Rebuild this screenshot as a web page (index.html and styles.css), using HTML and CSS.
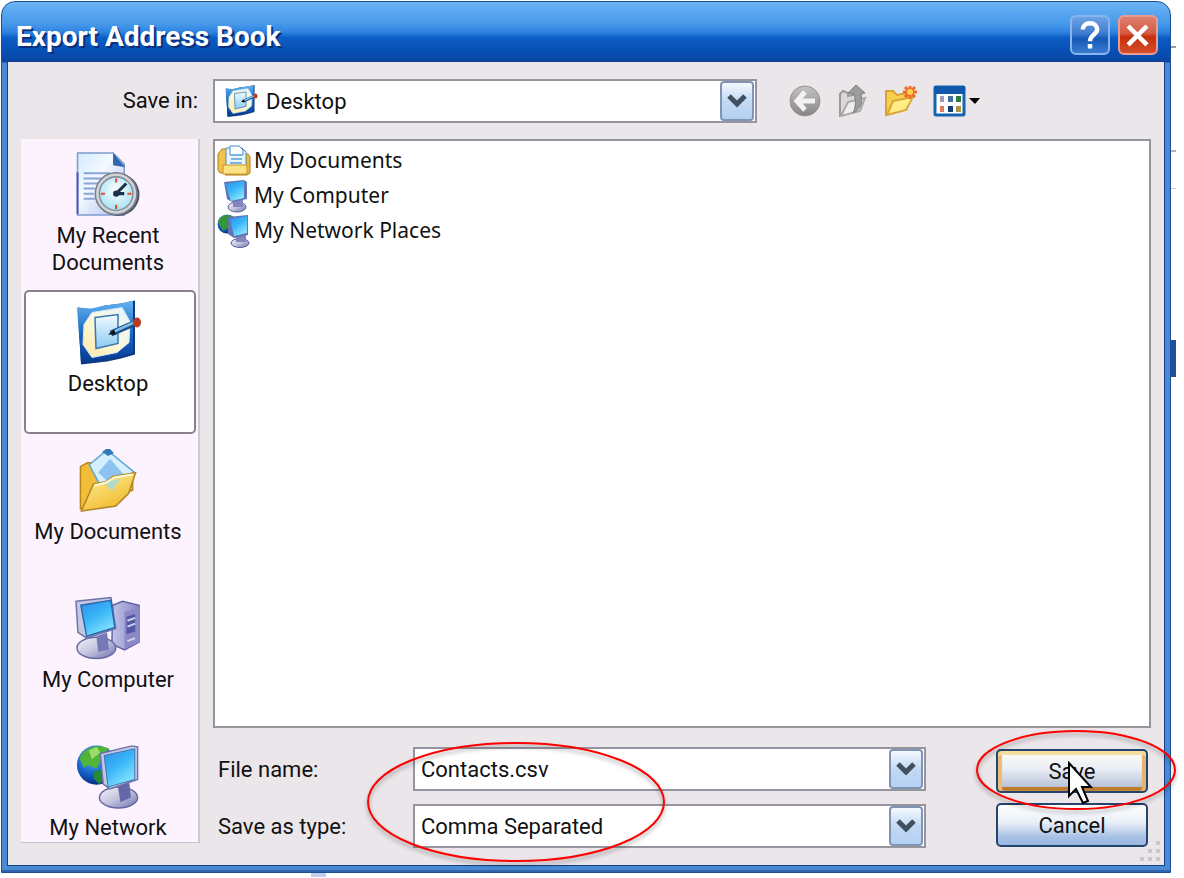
FILE: index.html
```html
<!DOCTYPE html>
<html lang="en">
<head>
<meta charset="utf-8">
<title>Export Address Book</title>
<meta name="viewport" content="width=device-width, initial-scale=1">
<link rel="stylesheet" href="styles.css">
</head>
<body>
<svg class="defs" aria-hidden="true">
  <defs>
    <linearGradient id="screen" x1="0" y1="0" x2=".6" y2="1"><stop offset="0" stop-color="#2f8fe8"/><stop offset=".5" stop-color="#37b4f8"/><stop offset="1" stop-color="#86e4ff"/></linearGradient>
    <linearGradient id="metal" x1="0" y1="0" x2="1" y2="1"><stop offset="0" stop-color="#f4f4fa"/><stop offset=".5" stop-color="#c3c4de"/><stop offset="1" stop-color="#6c6fae"/></linearGradient>
    <linearGradient id="tower" x1="0" y1="0" x2="1" y2="0"><stop offset="0" stop-color="#c3c4e8"/><stop offset="1" stop-color="#8788c4"/></linearGradient>
    <linearGradient id="paper" x1="0" y1="0" x2="1" y2="1"><stop offset="0" stop-color="#d3ecff"/><stop offset=".4" stop-color="#f4f9ff"/><stop offset="1" stop-color="#a9bdf0"/></linearGradient>
    <linearGradient id="folder" x1="0" y1="0" x2=".6" y2="1"><stop offset="0" stop-color="#fff3a0"/><stop offset="1" stop-color="#f0b92c"/></linearGradient>
    <linearGradient id="blotter" x1="0" y1="0" x2="0" y2="1"><stop offset="0" stop-color="#65b4f2"/><stop offset=".5" stop-color="#1d6ac4"/><stop offset="1" stop-color="#073a92"/></linearGradient>
    <linearGradient id="mat" x1="1" y1="0" x2="0" y2="1"><stop offset="0" stop-color="#e2f5ff"/><stop offset=".5" stop-color="#fbf8dc"/><stop offset="1" stop-color="#ffe9a4"/></linearGradient>
    <linearGradient id="sheet" x1="0" y1="0" x2="0" y2="1"><stop offset="0" stop-color="#f2fbff"/><stop offset="1" stop-color="#8ccbf3"/></linearGradient>
    <radialGradient id="globe" cx=".4" cy=".3" r=".7"><stop offset="0" stop-color="#5cb7ff"/><stop offset=".6" stop-color="#1464cc"/><stop offset="1" stop-color="#062f86"/></radialGradient>
    <radialGradient id="dial" cx=".5" cy=".4" r=".6"><stop offset="0" stop-color="#fff"/><stop offset="1" stop-color="#a6e2f2"/></radialGradient>
    <linearGradient id="grey" x1="0" y1="0" x2="0" y2="1"><stop offset="0" stop-color="#c4c4c4"/><stop offset="1" stop-color="#858585"/></linearGradient>
    <symbol id="i-recent" viewBox="0 0 64 64">
      <path d="M2 1h35l11 11v50H2z" fill="url(#paper)" stroke="#7c9bcd" stroke-width="1.500"/>
      <path d="M2 61V20" stroke="#5657b1" stroke-width="2"/>
      <path d="M37 1v12l12 2z" fill="#2f66ad"/>
      <path d="M8 21h26M8 26h18M8 31h14M8 36h11M8 41h10M8 46h11" stroke="#88a4d8" stroke-width="2"/>
      <circle cx="42" cy="42" r="21" fill="#4d5468"/><circle cx="40" cy="41" r="20.500" fill="#d2d3d8" stroke="#777e88" stroke-width="1.500"/>
      <circle cx="40" cy="41" r="16.500" fill="url(#dial)" stroke="#81919e" stroke-width="1.500"/>
      <path d="M40 26v4M40 52v4M25 41h4M51 41h4" stroke="#de4a34" stroke-width="2"/>
      <path d="M40 41l10-10M40 41h8" stroke="#17324a" stroke-width="3"/><circle cx="40" cy="41" r="3" fill="#17324a"/>
    </symbol>
    <symbol id="i-desktop" viewBox="0 0 66 64">
      <path d="M3 7l13 2 14-4 16-2 14-3v54l-14 4-14 3-26 3z" fill="#0c3a85"/>
      <path d="M2 7l14 1 14-3 16-2 12-3v53l-13 3-14 3-25 3z" fill="url(#blotter)"/>
      <path d="M17 12l30-5 8 14-1 21-12 10-25 5-9-13 1-20z" fill="url(#mat)" stroke="#cfeaff" stroke-width="1"/>
      <path d="M20 17l23-3v29l-22 5z" fill="url(#sheet)" stroke="#3979af" stroke-width="1.500"/>
      <path d="M36 33l25-11" stroke="#174b86" stroke-width="6"/><path d="M37 32l22-10" stroke="#7bbde8" stroke-width="3"/>
      <path d="M33 34l6-5 2 5z" fill="#111"/><ellipse cx="62" cy="22" rx="4" ry="5" fill="#b83b22"/>
    </symbol>
    <symbol id="i-docs" viewBox="0 0 64 66">
      <path d="M4 62V19l7-4h9l7 7 30 1v20z" fill="#f2bd38" stroke="#b8851b" stroke-width="1.500"/>
      <path d="M13 17L31 2l27 22-14 22-20-8z" fill="#d6effd" stroke="#5aa6d4" stroke-width="1.500"/>
      <path d="M22 25l12-14 14 16-10 13z" fill="#8dc3f0"/><path d="M26 4l4-3h4l4 4-6 3z" fill="#2f7abb"/>
      <path d="M5 64l12-27 13-3 7-5 23-4-7 21-13 13z" fill="url(#folder)" stroke="#b38424" stroke-width="1.500"/>
      <path d="M28 35l17-4-9 13z" fill="#a4d8de" opacity=".8"/><path d="M18 38l12-3 8-5 19-3" stroke="#fffad7" stroke-width="2" fill="none"/>
    </symbol>
    <symbol id="i-computer" viewBox="0 0 68 66">
      <path d="M39 9l10-4 17 4v38l-15 8-13-6z" fill="url(#tower)" stroke="#6464a4" stroke-width="1.500"/>
      <path d="M51 16l15-5v36l-15 7z" fill="#8a8ac6"/><path d="M53 21l9-3v18l-9 3z" fill="#5558a4"/><path d="M54 25l8-3M54 31l8-3M54 46l8-3" stroke="#d0d1ee" stroke-width="2"/>
      <ellipse cx="22" cy="53" rx="20" ry="11" fill="url(#metal)" stroke="#6668a3" stroke-width="1.500"/>
      <path d="M22 41l11-4 2 18-11 2z" fill="#7779b4"/>
      <path d="M1 5l36-4 5 32-30 10-9-6z" fill="#c4c7e2" stroke="#6e72aa" stroke-width="1.500"/>
      <path d="M6 9l31-5 4 28-29 9z" fill="url(#screen)" stroke="#2d67ac" stroke-width="1.500"/>
    </symbol>
    <symbol id="i-network" viewBox="0 0 66 68">
      <circle cx="21" cy="22" r="20.500" fill="url(#globe)"/>
      <path d="M3 15C8 3 23-1 35 5l-6 4 5 7-9 2-4 8-9-4-4 3z" fill="#52b437"/><path d="M18 29l9-2 5 7-8 8-6-6z" fill="#238a38"/><path d="M13 7l8-4 4 6-9 7z" fill="#9bdb6b"/>
      <ellipse cx="44" cy="56" rx="20" ry="11" fill="url(#metal)" stroke="#6668a3" stroke-width="1.500"/>
      <path d="M43 42l12-4 2 18-11 5z" fill="#6468a8"/>
      <path d="M25 10l33-8 6 1v34l-29 10-7-5z" fill="#c4c7e2" stroke="#6e72aa" stroke-width="1.500"/>
      <path d="M29 12l32-7v32l-28 8z" fill="url(#screen)" stroke="#3a73ae"/>
    </symbol>
    <symbol id="i-docfolder" viewBox="0 0 34 32">
      <path d="M1 9l4-5h7v24H3l-2-3z" fill="#f2c34c" stroke="#a87a1c"/><path d="M24 9h7l2 3v16l-3 2H8z" fill="#eebc3e" stroke="#a87a1c"/>
      <path d="M9 3h16l4 4v15H9z" fill="#eaf6ff" stroke="#4c88c8"/><path d="M13 1h9l4 4v5H13z" fill="#fff" stroke="#4c88c8"/>
      <path d="M14 10h11M14 14h11M13 18h12" stroke="#79b6e6" stroke-width="2"/><path d="M6 20h24v9H6z" fill="#fbe284" stroke="#c79427"/>
    </symbol>
    <symbol id="i-pc" viewBox="0 0 34 34">
      <ellipse cx="20" cy="28" rx="9" ry="5" fill="url(#metal)" stroke="#5a5c9c"/><path d="M16 19h10v9H16z" fill="#8386bd"/>
      <path d="M7 3l20-2 3 2v17l-15 3-5-3z" fill="#6174b4"/><path d="M8 5l19-3v17l-13 3z" fill="url(#screen)"/>
    </symbol>
    <symbol id="i-net" viewBox="0 0 34 34">
      <circle cx="10" cy="10" r="9.500" fill="url(#globe)"/><path d="M1 8c2-7 10-9 16-5l-3 9-8 5z" fill="#359638"/>
      <ellipse cx="23" cy="29" rx="9" ry="4.500" fill="url(#metal)" stroke="#5a5c9c"/><path d="M19 21h10v7H19z" fill="#8386bd"/>
      <path d="M11 3l20-2v20l-14 3-6-4z" fill="#6174b4"/><path d="M13 5l17-3v17l-13 3z" fill="url(#screen)"/>
    </symbol>
    <symbol id="i-chevron" viewBox="0 0 20 14"><path d="M2 2l8 8 8-8" fill="none" stroke="#40505f" stroke-width="5"/></symbol>
  </defs>
</svg>

<main class="window">
  <header class="titlebar">
    <h1 class="title">Export Address Book</h1>
    <button class="caption-btn" type="button" aria-label="Help">
      <svg viewBox="0 0 40 40" fill="none" stroke="#fff" stroke-width="5"><path d="M12 14c0-4 3-7 8-7s8 3 8 7c0 5-8 6-8 13"/><path d="M20 30v5"/></svg>
    </button>
    <button class="caption-btn caption-close" type="button" aria-label="Close">
      <svg viewBox="0 0 40 40" fill="none" stroke="#fff" stroke-width="5"><path d="M9 10l21 21M30 10L9 31"/></svg>
    </button>
  </header>

  <form class="body" onsubmit="return false">
    <label class="save-in" for="folder">Save in:</label>
    <div class="lookup">
      <div class="combo combo-folder">
        <svg class="combo-icon" aria-hidden="true"><use href="#i-desktop"/></svg>
        <select class="field" id="folder"><option>Desktop</option></select>
        <span class="arrow"><svg><use href="#i-chevron"/></svg></span>
      </div>
      <div class="tools">
        <button class="tool" type="button" aria-label="Back">
          <svg viewBox="0 0 32 32"><circle cx="16" cy="16" r="15" fill="url(#grey)" stroke="#929292"/><path d="M16 7l-8 9 8 9M9 16h17" fill="none" stroke="#f4f1f3" stroke-width="5"/></svg>
        </button>
        <button class="tool" type="button" aria-label="Up one level">
          <svg viewBox="0 0 32 32"><path d="M3 31V9l3-3 5 2v3l9-2v16z" fill="#d9d9da" stroke="#999" stroke-width="2"/><path d="M4 31l7-14 17-4-5 13z" fill="#eee" stroke="#aaa" stroke-width="2"/><path d="M11 8l8-8 9 8-4 1c2 9 0 15-8 19 3-7 3-12 1-19z" fill="#9c9c9c" stroke="#808080"/></svg>
        </button>
        <button class="tool" type="button" aria-label="Create new folder">
          <svg viewBox="0 0 32 32"><path d="M1 30V6h7l4 4 10-2v16z" fill="#f7d04e" stroke="#d9a132" stroke-width="2"/><path d="M2 30l6-14 20-4-7 13z" fill="#ffec83" stroke="#dba83a" stroke-width="2"/><path d="M25 1v13M18 7h14M20 2l10 10M30 2L20 12" stroke="#f06a28" stroke-width="3"/><circle cx="25" cy="7" r="3" fill="#ffd34c"/></svg>
        </button>
        <button class="tool tool-views" type="button" aria-label="Views">
          <svg viewBox="0 0 48 32"><rect x="2" y="2" width="29" height="28" rx="1" fill="#fff" stroke="#1764ae" stroke-width="3"/><path d="M1 1h31v8H1z" fill="#0f58ac"/><path d="M7 11h4v6H7z" fill="#a198b5"/><path d="M15 11h5v6h-5z" fill="#41719d"/><path d="M23 11h5v6h-5z" fill="#2d7a43"/><path d="M7 21h4v6H7z" fill="#d97c60"/><path d="M15 21h5v6h-5z" fill="#173d79"/><path d="M23 21h5v6h-5z" fill="#ae9444"/><path d="M36 13h11l-5 6z" fill="#000"/></svg>
        </button>
      </div>
    </div>

    <nav class="places" aria-label="Places">
      <button class="place" type="button"><svg class="place-icon"><use href="#i-recent"/></svg><span>My Recent<br>Documents</span></button>
      <button class="place place-active" type="button"><svg class="place-icon"><use href="#i-desktop"/></svg><span>Desktop</span></button>
      <button class="place" type="button"><svg class="place-icon"><use href="#i-docs"/></svg><span>My Documents</span></button>
      <button class="place" type="button"><svg class="place-icon"><use href="#i-computer"/></svg><span>My Computer</span></button>
      <button class="place place-last" type="button"><svg class="place-icon"><use href="#i-network"/></svg><span>My Network</span></button>
    </nav>

    <ul class="files">
      <li class="file"><svg class="file-icon"><use href="#i-docfolder"/></svg>My Documents</li>
      <li class="file"><svg class="file-icon"><use href="#i-pc"/></svg>My Computer</li>
      <li class="file"><svg class="file-icon"><use href="#i-net"/></svg>My Network Places</li>
    </ul>

    <div class="footer">
      <div class="fields">
        <label for="name">File name:</label>
        <div class="combo">
          <input class="field" id="name" type="text" value="Contacts.csv">
          <span class="arrow"><svg><use href="#i-chevron"/></svg></span>
        </div>
        <label for="type">Save as type:</label>
        <div class="combo">
          <select class="field" id="type"><option>Comma Separated</option></select>
          <span class="arrow"><svg><use href="#i-chevron"/></svg></span>
        </div>
        <svg class="ring ring-fields" viewBox="0 0 300 122" aria-hidden="true"><ellipse cx="150" cy="60" rx="148" ry="59"/></svg>
      </div>
      <div class="actions">
        <button class="btn btn-default" type="submit">Save</button>
        <button class="btn" type="button">Cancel</button>
        <svg class="ring ring-save" viewBox="0 0 204 84" aria-hidden="true"><ellipse cx="102" cy="41" rx="99" ry="39"/></svg>
        <svg class="pointer" viewBox="0 0 26 44" aria-hidden="true"><path d="M2 2v33l7-7 7 14 5-2-6-14h9z" fill="#fff" stroke="#000" stroke-width="2"/></svg>
      </div>
    </div>
    <svg class="grip" viewBox="0 0 24 24" aria-hidden="true"><path d="M18 2h4v4h-4zM10 10h4v4h-4zM18 10h4v4h-4zM2 18h4v4H2zM10 18h4v4h-4zM18 18h4v4h-4z" fill="#c9c5cb"/></svg>
  </form>
</main>
</body>
</html>
```
FILE: styles.css
```css
* { box-sizing: border-box; }

body {
  margin: 0;
  padding: 1px 13px 5px 1px;
  min-height: 100vh;
  font: 22px/27px Roboto, "Liberation Sans", sans-serif;
  color: #111;
  background:
    linear-gradient(#1c4f9f, #1c4f9f) right 8px top 340px / 6px 37px no-repeat,
    linear-gradient(#9a9aa6, #9a9aa6) right 8px top 46px / 6px 2px no-repeat,
    linear-gradient(#b4b4be, #b4b4be) right 8px top 150px / 6px 2px no-repeat,
    linear-gradient(#cfcfd8, #cfcfd8) right 8px top 188px / 6px 1px no-repeat,
    linear-gradient(#c5cdea, #c5cdea) left 311px bottom 1px / 15px 5px no-repeat,
    #fff;
}

button, input, select { font: inherit; color: inherit; }
.defs { position: absolute; width: 0; height: 0; }

.window {
  display: flex;
  flex-direction: column;
  min-height: calc(100vh - 6px);
  padding: 0 6px 7px;
  border: 1px solid #1b4f95;
  border-radius: 14px 14px 0 0;
  background: linear-gradient(#6cb4f5 0, #4698ea 22px, #2f84e0 30px, #0a5cc4 36px, #0745a3 60px, #4a8ad2 61px);
  box-shadow: inset 0 -2px #2f65ad;
}

.titlebar {
  display: flex;
  align-items: center;
  gap: 8px;
  height: 60px;
  padding: 6px 6px 0 8px;
}
.title {
  flex: 1;
  margin: 0;
  padding-top: 4px;
  font: bold 28px/32px Roboto, "Liberation Sans", sans-serif;
  color: #fff;
  text-shadow: 2px 2px #0b2f7c;
}
.caption-btn {
  width: 40px;
  height: 40px;
  padding: 0;
  border: 2px solid #86b4ee;
  border-radius: 6px;
  background: linear-gradient(#6da3e4, #3f7cd0 45%, #1559b8 60%, #3a7bd0);
}
.caption-btn svg { display: block; width: 36px; height: 36px; }
.caption-close {
  border-color: #eb9c92;
  background: linear-gradient(#dc7f6d, #d45c45 45%, #c52f0c 55%, #d64d2c);
}

.body {
  position: relative;
  flex: 1;
  display: grid;
  grid-template-columns: 179px 1fr;
  grid-template-rows: auto 1fr auto;
  column-gap: 13px;
  padding: 17px 13px 17px;
  background: #ebe6ea;
  box-shadow: 0 0 0 1px #123f85;
}

.save-in {
  align-self: center;
  justify-self: end;
  margin: 0 2px 17px 0;
}
.lookup { display: flex; gap: 32px; margin-bottom: 16px; }

.combo {
  display: flex;
  align-items: stretch;
  position: relative;
  height: 44px;
  border: 2px solid #96959f;
  background: #fff;
}
.combo-folder { flex: 0 1 544px; }
.combo-icon { flex: none; width: 34px; height: 32px; margin: 4px 2px 0 9px; }
.field {
  flex: 1;
  min-width: 0;
  padding: 0 40px 0 6px;
  border: 0;
  outline: 0;
  background: transparent;
  appearance: none;
}
.arrow {
  position: absolute;
  top: 0;
  right: 1px;
  bottom: 0;
  display: flex;
  align-items: center;
  justify-content: center;
  width: 34px;
  border: 2px solid #8294b4;
  border-radius: 4px;
  background: linear-gradient(#f4f9ff, #c3d9f3 50%, #b4d0f2);
  pointer-events: none;
}
.arrow svg { width: 20px; height: 14px; }

.tools { display: flex; align-items: center; gap: 16px; }
.tool { width: 32px; height: 32px; padding: 0; border: 0; background: none; }
.tool svg { display: block; width: 100%; height: 100%; }
.tool-views { width: 48px; }

.places {
  grid-row: 2 / 4;
  display: flex;
  flex-direction: column;
  gap: 4px;
  align-self: start;
  padding: 3px 2px 0 3px;
  border-right: 2px solid #cfcad0;
  background: #fdf3fe;
  box-shadow: 0 1px #c9c5ca;
}
.place {
  display: flex;
  flex-direction: column;
  align-items: center;
  gap: 5px;
  height: 144px;
  padding: 8px 4px 0 0;
  border: 2px solid transparent;
  border-radius: 5px;
  background: none;
  white-space: nowrap;
}
.place-icon { flex: none; width: 66px; height: 65px; }
.place-active { border-color: #85828a; background: #fff; }
.place-last { height: 108px; overflow: hidden; }

.files {
  margin: 0;
  padding: 2px;
  border: 2px solid #96959b;
  background: #fff;
  list-style: none;
  font: 21px/35px "Noto Sans", sans-serif;
}
.file { display: flex; align-items: center; gap: 3px; height: 35px; }
.file-icon { width: 34px; height: 34px; }

.footer {
  display: flex;
  justify-content: space-between;
  padding: 19px 3px 0 5px;
}
.fields {
  position: relative;
  display: grid;
  grid-template-columns: 195px 1fr;
  align-items: center;
  row-gap: 13px;
  flex: 0 1 708px;
}
.actions {
  position: relative;
  display: flex;
  flex-direction: column;
  gap: 10px;
  width: 152px;
  padding-top: 2px;
}
.btn {
  height: 44px;
  padding: 0;
  border: 2px solid #24446f;
  border-radius: 5px;
  background: linear-gradient(#fff, #e9eff8 45%, #a6c0e4 80%, #9bb8e0);
}
.btn-default {
  background: linear-gradient(#fdfcf8, #eaedf5 45%, #abb9d4);
  box-shadow: inset 0 4px 1px #f5dda0, inset 4px 0 1px #e9bd78, inset -4px 0 1px #e6b36a, inset 0 -4px 1px #bd7a2b;
}

.ring {
  position: absolute;
  overflow: visible;
  fill: none;
  stroke: #f00;
  stroke-width: 2;
  filter: drop-shadow(0 3px 2px rgb(0 0 0 / 35%));
  pointer-events: none;
}
.ring-fields { left: 148px; top: -5px; width: 300px; height: 122px; }
.ring-save { left: -22px; top: -18px; width: 204px; height: 84px; }
.pointer { position: absolute; left: 71px; top: 14px; width: 26px; height: 44px; pointer-events: none; }
.grip { position: absolute; right: 2px; bottom: 2px; width: 24px; height: 24px; }
```
